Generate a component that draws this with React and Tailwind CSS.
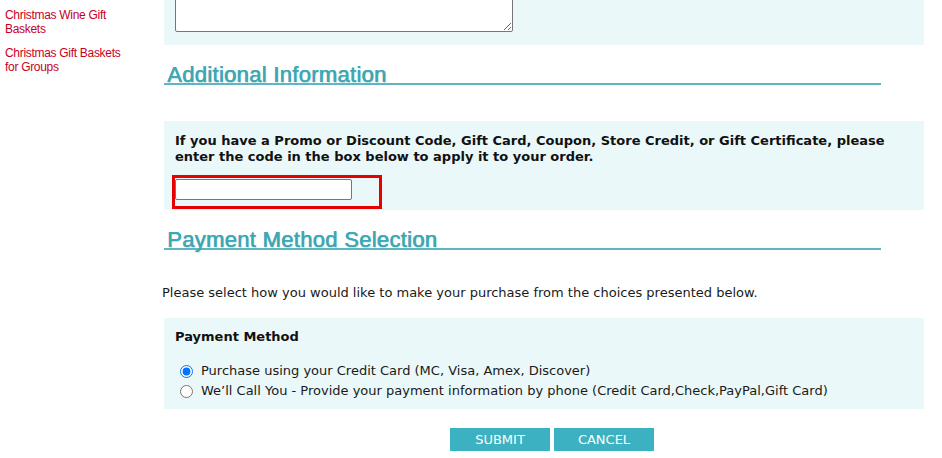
import React from 'react';

const body = { fontFamily: '"DejaVu Sans", Verdana, sans-serif' };
const heading = { fontFamily: '"Liberation Sans", Arial, sans-serif' };

const SectionHeading = ({ title, className }) => (
  <div className={`w-[717px] h-[20px] border-b-2 border-[#5db6c1] ${className}`}>
    <h2
      style={heading}
      className="pl-[3px] text-[22px] leading-[20px] tracking-[0.3px] text-[#3ea7b3] [text-shadow:0.6px_0_0_#3ea7b3,1px_1px_1px_rgba(62,167,179,0.35)]"
    >
      {title}
    </h2>
  </div>
);

const Sidebar = () => (
  <div
    style={{ fontFamily: '"Liberation Sans", Tahoma, sans-serif' }}
    className="w-[164px] shrink-0 pl-[5px] pt-[8px] text-[12px] leading-[14px] tracking-[-0.3px] text-[#c8001e]"
  >
    <a href="#" className="block">Christmas Wine Gift<br />Baskets</a>
    <a href="#" className="block mt-[10px]">Christmas Gift Baskets<br />for Groups</a>
  </div>
);

export default function App() {
  return (
    <div style={body} className="flex w-[942px] h-[458px] overflow-hidden bg-white text-[#1a1a1a]">
      <Sidebar />

      <div className="w-[760px] shrink-0">
        {/* comments panel, scrolled partly out of view */}
        <div className="h-[45px] overflow-hidden flex items-end bg-[#eaf8f9] pl-[11px] pb-[13px]">
          <textarea className="w-[338px] h-[80px] shrink-0 border border-[#767676] rounded-[2px] bg-white" />
        </div>

        <SectionHeading title="Additional Information" className="mt-[20px]" />

        <div className="mt-[36px] bg-[#eaf8f9] pt-[12px] pb-[1px]">
          <p className="pl-[11px] pr-[30px] text-[13px] leading-[16px] font-bold text-[#111]">
            If you have a Promo or Discount Code, Gift Card, Coupon, Store Credit, or Gift Certificate, please enter the code in the box below to apply it to your order.
          </p>
          <div className="mt-[10px] ml-[8px] w-[210px] h-[34px] border-[3px] border-[#e60000] pt-[1px]">
            <input type="text" className="block w-[177px] h-[21px] border border-[#767676] rounded-[2px] bg-white" />
          </div>
        </div>

        <SectionHeading title="Payment Method Selection" className="mt-[20px]" />

        <p className="mt-[35px] -ml-[2px] text-[13px] leading-[16px]">
          Please select how you would like to make your purchase from the choices presented below.
        </p>

        <div className="mt-[17px] bg-[#eaf8f9] pt-[11px] pb-[8px] text-[13px]">
          <div className="pl-[11px] leading-[16px] font-bold text-[#111]">Payment Method</div>
          <div className="mt-[16px]">
            <label className="flex items-center h-[20px]">
              <input type="radio" name="pay" defaultChecked className="ml-[16px] mr-[8px] w-[13px] h-[13px]" />
              <span>Purchase using your Credit Card (MC, Visa, Amex, Discover)</span>
            </label>
            <label className="flex items-center h-[20px]">
              <input type="radio" name="pay" className="ml-[16px] mr-[8px] w-[13px] h-[13px]" />
              <span>We’ll Call You - Provide your payment information by phone (Credit Card,Check,PayPal,Gift Card)</span>
            </label>
          </div>
        </div>

        <div className="mt-[19px] flex gap-[4px] pl-[286px]">
          <button className="w-[100px] h-[23px] bg-[#3bb1c1] text-white text-[13px] leading-[23px]">SUBMIT</button>
          <button className="w-[100px] h-[23px] bg-[#3bb1c1] text-white text-[13px] leading-[23px]">CANCEL</button>
        </div>
      </div>
    </div>
  );
}
